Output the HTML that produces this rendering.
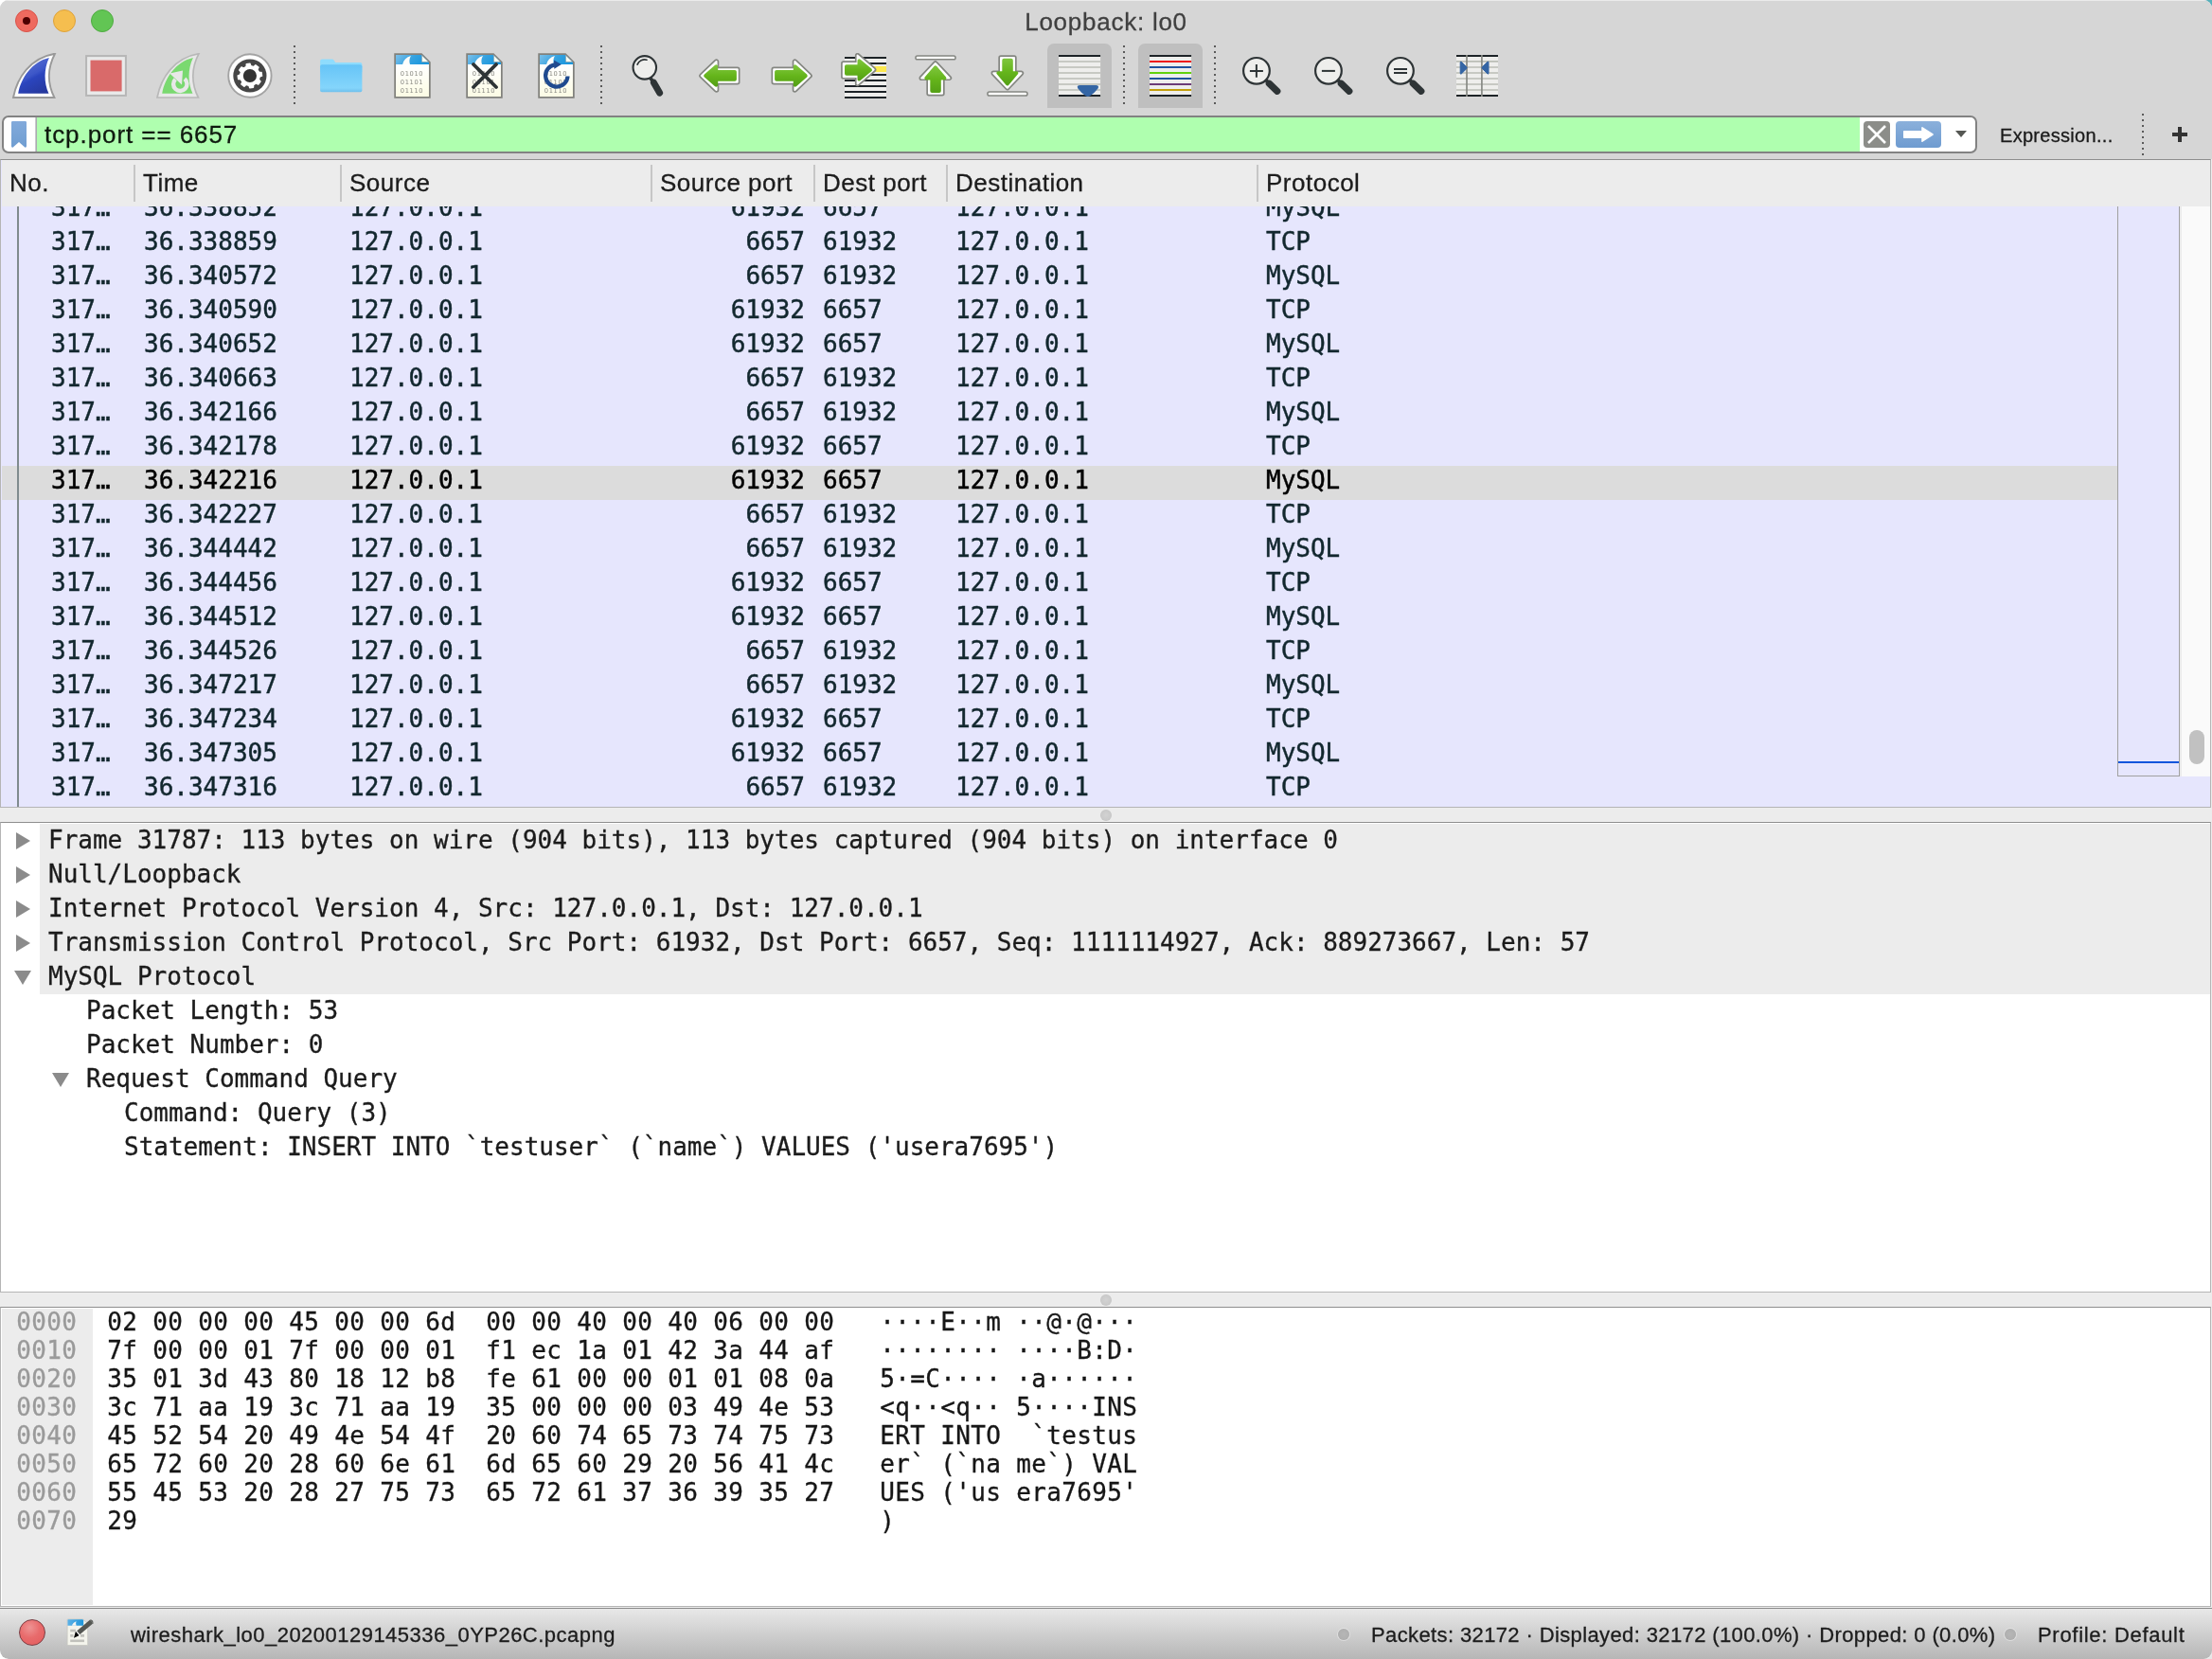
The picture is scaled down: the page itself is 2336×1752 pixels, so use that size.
<!DOCTYPE html>
<html lang="en"><head><meta charset="utf-8"><title>Loopback: lo0</title>
<style>
html,body{margin:0;padding:0;background:#fff;}
body{width:2336px;height:1752px;overflow:hidden;}
#ctr{position:absolute;left:2322px;top:0;width:14px;height:14px;background:linear-gradient(225deg,#58b0bb 0,#58b0bb 30%,#bdbdbd 42%,#d6d6d6 60%);}
#cbr{position:absolute;left:2322px;top:1738px;width:14px;height:14px;background:#e6e6e6;}
#win{position:relative;width:2336px;height:1752px;overflow:hidden;background:#ececec;border-radius:9px 9px 7px 9px;font-family:"Liberation Sans","DejaVu Sans",sans-serif;color:#1a1a1a;}
#win i{display:block;position:absolute;font-style:normal;}
#win span,#win div,#win svg{position:absolute;}
#win{position:relative;will-change:transform;}

/* title bar */
#titlebar{left:0;top:0;width:2336px;height:168px;background:#d6d6d6;box-shadow:inset 0 1px 0 #ebebeb;}
.tl{top:10px;width:24px;height:24px;border-radius:50%;box-sizing:border-box;}
.tl-r{left:16px;background:#ee6a5f;border:1px solid #d9534a;}
.tl-r i{left:7px;top:7px;width:8px;height:8px;border-radius:50%;background:#4d0000;}
.tl-y{left:56px;background:#f5be4f;border:1px solid #dea23a;}
.tl-g{left:96px;background:#62c554;border:1px solid #4fab42;}
#title{left:0;top:7px;width:2336px;text-align:center;font-size:26px;letter-spacing:0.75px;line-height:32px;color:#404040;}

/* toolbar */
#toolbar{left:0;top:0;width:2336px;height:120px;}
.tsep{top:48px;width:2px;height:62px;background:repeating-linear-gradient(to bottom,#5a5a5a 0,#5a5a5a 2px,transparent 2px,transparent 6px);}
.pressed{top:46px;width:68px;height:68px;border-radius:7px 7px 0 0;background:#bfbfbf;}
.ti{top:56px;}

/* filter bar */
#filter{left:2px;top:122px;width:2086px;height:40px;box-sizing:border-box;border:2px solid #828282;border-radius:7px;background:#fff;overflow:hidden;}
#fbm{left:7px;top:3px;width:18px;height:30px;}
#fsep{left:33px;top:0;width:2px;height:36px;background:linear-gradient(to right,#d8d8dc,#9c9ca2);}
#fgreen{left:35px;top:0;width:1925px;height:36px;background:#afffaf;}
#ftext{left:43px;top:0;font-size:26px;letter-spacing:0.93px;line-height:36px;color:#0f1a0f;white-space:nowrap;}
#fx{left:1964px;top:4px;width:28px;height:28px;}
#fapply{left:1998px;top:4px;width:48px;height:28px;}
#fdd{left:2061px;top:14px;width:0;height:0;border-left:6.7px solid transparent;border-right:6.7px solid transparent;border-top:7.2px solid #555753;}
#expr{left:2112px;top:123px;font-size:20px;letter-spacing:0.3px;line-height:40px;color:#1a1a1a;white-space:nowrap;}
#esep{left:2262px;top:120px;height:44px;}
#plus{left:2294px;top:134px;width:16px;height:16px;background:linear-gradient(#333,#333) 6px 0/4px 16px no-repeat,linear-gradient(#333,#333) 0 6px/16px 4px no-repeat;}

/* packet list */
#plist{left:0;top:168px;width:2335px;height:685px;box-sizing:border-box;border:1px solid #b5b5b5;border-top-color:#8e8e8e;background:#e6e6fd;overflow:hidden;}
.pin{left:1px;top:0;width:2332px;height:100%;}
#detail .pin,#hex .pin{top:1px;}
#phead{left:0;top:0;width:2332px;height:49px;background:#ececec;}
.hc{top:0;font-size:26px;letter-spacing:0.5px;line-height:49px;white-space:nowrap;color:#1c1c1c;}
#win i.hs{top:5px;width:2px;height:39px;background:#c6c6c6;}
#prows{left:0;top:49px;width:2332px;height:634px;overflow:hidden;background:#e6e6fd;font-family:"DejaVu Sans Mono","Liberation Mono",monospace;font-size:26px;color:#12272e;}
.pr{left:0;width:2332px;height:36px;line-height:30px;white-space:pre;}
.pr.sel{background:#dcdcdc;color:#000;width:2234px;}
.c{top:0;}
.c0{left:52px;}
.c1{left:150px;}
.c2{left:367px;}
.c3{left:688px;width:160px;text-align:right;}
.c4{left:867px;}
.c5{left:1007px;}
.c6{left:1335px;}
#convline{left:16px;top:0;width:2px;height:634px;background:#808b8e;}
#minimap{left:2234px;top:49px;width:66px;height:602px;box-sizing:border-box;border:1.3px solid #a0a0a0;border-top:none;background:#e6e6fd;}
#minimap i{left:0;top:586px;width:64px;height:2px;background:#0f55dc;}
#vscroll{left:2300px;top:49px;width:32px;height:602px;background:#fafafa;box-sizing:border-box;border-left:2px solid #ebebeb;}
#vscroll i{left:8px;top:553px;width:16px;height:36px;border-radius:8px;background:#c1c1c1;}

#win i.grip{left:1162px;width:12px;height:12px;border-radius:50%;background:radial-gradient(circle,#d2d2d2 0,#cbcbcb 55%,#b9b9b9 100%);box-sizing:border-box;}

/* detail */
#detail{left:0;top:868px;width:2335px;height:497px;box-sizing:border-box;border:1px solid #b5b5b5;border-top-color:#8e8e8e;background:#fff;overflow:hidden;font-family:"DejaVu Sans Mono","Liberation Mono",monospace;font-size:26px;color:#1b1b1b;}
#win i.dbg{left:40px;width:2292px;height:36px;background:#ececec;}
.dl{height:36px;line-height:34px;white-space:pre;}
#win i.tri{width:0;height:0;}
#win i.tri.c{margin-left:15px;margin-top:9px;border-left:15px solid #8b8b8b;border-top:9px solid transparent;border-bottom:9px solid transparent;}
#win i.tri.o{margin-left:13px;margin-top:11px;border-top:15px solid #8b8b8b;border-left:9px solid transparent;border-right:9px solid transparent;}

/* hex */
#hex{left:0;top:1380px;width:2335px;height:317px;box-sizing:border-box;border:1px solid #b5b5b5;border-top-color:#8e8e8e;background:#fff;overflow:hidden;font-family:"DejaVu Sans Mono","Liberation Mono",monospace;font-size:26px;color:#161616;}
#hoff{left:0;top:0;width:96px;height:313px;background:#ececec;}
.hr{left:0;height:30px;line-height:30px;white-space:pre;width:2332px;margin-top:-1px;letter-spacing:0.3467px;}
.hr span{top:0;white-space:pre;}
.ho{left:15.2px;color:#9a9a9a;}
.h1{left:111.2px;}
.h2{left:511.2px;}
.a1{left:927.2px;}
.a2{left:1071.2px;}

/* status */
#status{left:0;top:1698px;width:2336px;height:54px;background:linear-gradient(to bottom,#e8e8e8 0,#cfcfcf 50%,#b6b6b6 100%);border-top:1px solid #8c8c8c;box-sizing:border-box;border-radius:0 0 9px 9px;font-size:22px;color:#1c1c1c;}
#sred{left:20px;top:11px;width:28px;height:28px;border-radius:50%;background:radial-gradient(circle at 40% 30%,#ee9494 0,#e86b6c 45%,#e35a5b 100%);border:1.6px solid #7b3c42;box-sizing:border-box;}
#sedit{left:68px;top:7px;}
#sfile{left:138px;top:0;line-height:55px;white-space:nowrap;letter-spacing:0.48px;}
#spk{left:1448px;top:0;line-height:55px;white-space:nowrap;letter-spacing:0.38px;}
#sprof{left:2152px;top:0;line-height:55px;white-space:nowrap;letter-spacing:0.7px;}
#win i.sdot{top:21px;width:12px;height:12px;border-radius:50%;background:radial-gradient(circle,#b6b6b6 0,#b0b0b0 60%,#a4a4a4 100%);box-shadow:0 0 0 1px rgba(235,235,235,0.6);box-sizing:border-box;}

#prows{-webkit-text-stroke:0.45px currentColor;}
#detail,#hex{-webkit-text-stroke:0.32px currentColor;}
#title,#ftext,#expr,.hc,#status{-webkit-text-stroke:0.3px currentColor;}

</style></head>
<body>
<div id="ctr"></div><div id="cbr"></div>
<div id="win">
<div id="titlebar"><span class="tl tl-r"><i></i></span><span class="tl tl-y"></span><span class="tl tl-g"></span><div id="title">Loopback: lo0</div></div>
<div id="toolbar">
<span class="tsep" style="left:310px"></span><span class="tsep" style="left:634px"></span><span class="tsep" style="left:1186px"></span><span class="tsep" style="left:1282px"></span>
<svg class="ti" style="left:12px" width="48" height="48" viewBox="0 0 48 48"><defs><linearGradient id="gs1" x1="0.25" y1="0.05" x2="0.7" y2="1"><stop offset="0" stop-color="#5c72d4"/><stop offset="0.45" stop-color="#3c56c8"/><stop offset="0.55" stop-color="#2b45be"/><stop offset="1" stop-color="#27399f"/></linearGradient></defs>
<path d="M2 47 C6 26 20 5 46 0.7 C38 16 38 32 45.4 47 Z" fill="#fff" stroke="#999" stroke-width="1.9" stroke-linejoin="miter"/>
<path d="M7.2 42.8 C10 26 22 9 39.9 4.9 C34.2 17 34.2 31 39.5 42.8 Z" fill="url(#gs1)"/></svg>
<svg class="ti" style="left:88px" width="48" height="48" viewBox="0 0 48 48"><rect x="3.1" y="3.1" width="41.8" height="41.8" fill="#e9eaea" stroke="#b6b6b6" stroke-width="2"/>
<rect x="7.5" y="7.6" width="33.1" height="32.8" fill="#d96a6a"/></svg>
<svg class="ti" style="left:164px" width="48" height="48" viewBox="0 0 48 48"><path d="M2 47 C6 26 20 5 46 0.7 C38 16 38 32 45.4 47 Z" fill="#e8e8e8" stroke="#b8b8b8" stroke-width="1.7"/>
<path d="M7.2 42.8 C10 26 22 9 39.9 4.9 C34.2 17 34.2 31 39.5 42.8 Z" fill="#7ad970"/>
<path d="M30.93 27.28 A7.2 7.2 0 1 1 21.2 27.7" fill="none" stroke="#e8e8e8" stroke-width="4.4"/>
<path d="M15.2 21.4 L29 18.6 L28 33.6 Z" fill="#e8e8e8"/></svg>
<svg class="ti" style="left:240px" width="48" height="48" viewBox="0 0 48 48"><circle cx="23.9" cy="24" r="22.7" fill="#fff" stroke="#a3a3a3" stroke-width="1.9"/>
<circle cx="23.9" cy="24" r="17.6" fill="#464646"/>
<path d="M33.43 20.36 L35.99 20.43 L36.50 24.10 L34.06 24.88 L33.21 28.16 L34.97 30.02 L32.74 32.98 L30.46 31.81 L27.54 33.53 L27.47 36.09 L23.80 36.60 L23.02 34.16 L19.74 33.31 L17.88 35.07 L14.92 32.84 L16.09 30.56 L14.37 27.64 L11.81 27.57 L11.30 23.90 L13.74 23.12 L14.59 19.84 L12.83 17.98 L15.06 15.02 L17.34 16.19 L20.26 14.47 L20.33 11.91 L24.00 11.40 L24.78 13.84 L28.06 14.69 L29.92 12.93 L32.88 15.16 L31.71 17.44 Z" fill="#fff" stroke="#fff" stroke-width="1.6" stroke-linejoin="round"/>
<circle cx="23.9" cy="24" r="10.6" fill="#fff"/>
<circle cx="23.9" cy="24" r="7.1" fill="#333"/></svg>
<svg class="ti" style="left:336px" width="48" height="48" viewBox="0 0 48 48"><defs><linearGradient id="gf1" x1="0" y1="0" x2="0" y2="1"><stop offset="0" stop-color="#66c4f7"/><stop offset="0.85" stop-color="#84d5fb"/><stop offset="1" stop-color="#6fc0ec"/></linearGradient></defs>
<path d="M2.1 8.4 Q2.1 6.4 4.1 6.4 L14.6 6.4 Q15.8 6.4 16.6 7.6 L18.2 10 L44.4 10 Q46.4 10 46.4 12 L46.4 20 L2.1 20 Z" fill="#8fdcfd"/>
<path d="M2.1 14.2 Q2.1 12.2 4.1 12.2 L44.4 12.2 Q46.4 12.2 46.4 14.2 L46.4 39.4 Q46.4 41.2 44.6 41.2 L3.9 41.2 Q2.1 41.2 2.1 39.4 Z" fill="url(#gf1)"/></svg>
<svg class="ti" style="left:412px" width="48" height="48" viewBox="0 0 48 48"><defs><linearGradient id="gfla" x1="0" y1="0" x2="1" y2="0.25"><stop offset="0" stop-color="#7cc0ea"/><stop offset="0.55" stop-color="#35a2e0"/><stop offset="1" stop-color="#1b97dd"/></linearGradient>
<linearGradient id="gfba" x1="0" y1="0" x2="0" y2="1"><stop offset="0.25" stop-color="#ffffff"/><stop offset="1" stop-color="#fcfce4"/></linearGradient></defs>
<path d="M5.15 1.1 L33.1 1.1 L41.85 9.8 L41.85 46.75 L5.15 46.75 Z" fill="url(#gfba)" stroke="#81817c" stroke-width="1.75" stroke-linejoin="miter"/>
<path d="M6 1.95 L32.8 1.95 L41 10.1 L41 11.9 L6 11.9 Z" fill="url(#gfla)"/>
<path d="M13.1 11.9 C14.2 7.6 17.2 4.4 21.9 3.05 C20.2 6 20 9 21 11.9 Z" fill="#fdfdfb"/>
<path d="M33.4 2.2 L33.4 9.5 L40.8 9.5 Z" fill="#fbfbef" stroke="#6d8fa3" stroke-width="0.6"/>
<g font-family="DejaVu Sans, sans-serif" font-size="6.7" fill="#888882" letter-spacing="0.62"><text x="10.8" y="23.7">01010</text><text x="10.8" y="32.65">01101</text><text x="10.8" y="41.6">01110</text></g></svg>
<svg class="ti" style="left:488px" width="48" height="48" viewBox="0 0 48 48"><defs><linearGradient id="gflb" x1="0" y1="0" x2="1" y2="0.25"><stop offset="0" stop-color="#7cc0ea"/><stop offset="0.55" stop-color="#35a2e0"/><stop offset="1" stop-color="#1b97dd"/></linearGradient>
<linearGradient id="gfbb" x1="0" y1="0" x2="0" y2="1"><stop offset="0.25" stop-color="#ffffff"/><stop offset="1" stop-color="#fcfce4"/></linearGradient></defs>
<path d="M5.15 1.1 L33.1 1.1 L41.85 9.8 L41.85 46.75 L5.15 46.75 Z" fill="url(#gfbb)" stroke="#81817c" stroke-width="1.75" stroke-linejoin="miter"/>
<path d="M6 1.95 L32.8 1.95 L41 10.1 L41 11.9 L6 11.9 Z" fill="url(#gflb)"/>
<path d="M13.1 11.9 C14.2 7.6 17.2 4.4 21.9 3.05 C20.2 6 20 9 21 11.9 Z" fill="#fdfdfb"/>
<path d="M33.4 2.2 L33.4 9.5 L40.8 9.5 Z" fill="#fbfbef" stroke="#6d8fa3" stroke-width="0.6"/>
<g font-family="DejaVu Sans, sans-serif" font-size="6.7" fill="#888882" letter-spacing="0.62"><text x="10.8" y="23.7">01010</text><text x="10.8" y="32.65">01101</text><text x="10.8" y="41.6">01110</text></g><path d="M12 12 L36 36 M36 12 L12 36" stroke="#2e3436" stroke-width="3.8" stroke-linecap="round"/></svg>
<svg class="ti" style="left:564px" width="48" height="48" viewBox="0 0 48 48"><defs><linearGradient id="gflc" x1="0" y1="0" x2="1" y2="0.25"><stop offset="0" stop-color="#7cc0ea"/><stop offset="0.55" stop-color="#35a2e0"/><stop offset="1" stop-color="#1b97dd"/></linearGradient>
<linearGradient id="gfbc" x1="0" y1="0" x2="0" y2="1"><stop offset="0.25" stop-color="#ffffff"/><stop offset="1" stop-color="#fcfce4"/></linearGradient></defs>
<path d="M5.15 1.1 L33.1 1.1 L41.85 9.8 L41.85 46.75 L5.15 46.75 Z" fill="url(#gfbc)" stroke="#81817c" stroke-width="1.75" stroke-linejoin="miter"/>
<path d="M6 1.95 L32.8 1.95 L41 10.1 L41 11.9 L6 11.9 Z" fill="url(#gflc)"/>
<path d="M13.1 11.9 C14.2 7.6 17.2 4.4 21.9 3.05 C20.2 6 20 9 21 11.9 Z" fill="#fdfdfb"/>
<path d="M33.4 2.2 L33.4 9.5 L40.8 9.5 Z" fill="#fbfbef" stroke="#6d8fa3" stroke-width="0.6"/>
<g font-family="DejaVu Sans, sans-serif" font-size="6.7" fill="#888882" letter-spacing="0.62"><text x="10.8" y="23.7">01010</text><text x="10.8" y="32.65">01101</text><text x="10.8" y="41.6">01110</text></g><path d="M35.5 24.5 A11.7 11.7 0 1 1 21.8 12.4" fill="none" stroke="#1f4a8f" stroke-width="4.2"/>
<path d="M21 7.6 L28.9 11.9 L21.3 16.7 Z" fill="#1f4a8f"/></svg>
<svg class="ti" style="left:660px" width="48" height="48" viewBox="0 0 48 48"><circle cx="20.8" cy="15.35" r="12.25" fill="#eeeeec" stroke="#2e3436" stroke-width="2.1"/>
<path d="M13.07 12.07 A8.4 8.4 0 0 1 22.97 7.24" fill="none" stroke="#2e3436" stroke-width="1.7" stroke-linecap="round"/>
<path d="M26.4 26 L30.3 30.8" stroke="#2e3436" stroke-width="3.6"/>
<path d="M30.4 31.2 L36.6 42.1" stroke="#2e3436" stroke-width="7" stroke-linecap="round"/></svg>
<svg class="ti" style="left:736px" width="48" height="48" viewBox="0 0 48 48"><defs><linearGradient id="ggl" x1="0" y1="0" x2="0" y2="1"><stop offset="0" stop-color="#7cc43a"/><stop offset="0.5" stop-color="#65b51b"/><stop offset="1" stop-color="#56a216"/></linearGradient></defs><path d="M4.88 24.00 L20.60 9.05 L20.60 17.30 L42.80 17.30 L42.80 30.70 L20.60 30.70 L20.60 38.95 Z" fill="#848681" stroke="#848681" stroke-width="5.40" stroke-linejoin="round"/><path d="M4.88 24.00 L20.60 9.05 L20.60 17.30 L42.80 17.30 L42.80 30.70 L20.60 30.70 L20.60 38.95 Z" fill="#fff" stroke="#fff" stroke-width="2.00" stroke-linejoin="round"/><path d="M9.17 24.00 L20.30 14.27 L20.30 19.80 L40.00 19.80 L40.00 27.80 L20.30 27.80 L20.30 33.73 Z" fill="url(#ggl)" stroke="url(#ggl)" stroke-width="3.80" stroke-linejoin="round"/></svg>
<svg class="ti" style="left:812px" width="48" height="48" viewBox="0 0 48 48"><defs><linearGradient id="ggr" x1="0" y1="0" x2="0" y2="1"><stop offset="0" stop-color="#7cc43a"/><stop offset="0.5" stop-color="#65b51b"/><stop offset="1" stop-color="#56a216"/></linearGradient></defs><path d="M43.12 24.00 L27.40 9.05 L27.40 17.30 L5.20 17.30 L5.20 30.70 L27.40 30.70 L27.40 38.95 Z" fill="#848681" stroke="#848681" stroke-width="5.40" stroke-linejoin="round"/><path d="M43.12 24.00 L27.40 9.05 L27.40 17.30 L5.20 17.30 L5.20 30.70 L27.40 30.70 L27.40 38.95 Z" fill="#fff" stroke="#fff" stroke-width="2.00" stroke-linejoin="round"/><path d="M38.83 24.00 L27.70 14.27 L27.70 19.80 L8.00 19.80 L8.00 27.80 L27.70 27.80 L27.70 33.73 Z" fill="url(#ggr)" stroke="url(#ggr)" stroke-width="3.80" stroke-linejoin="round"/></svg>
<svg class="ti" style="left:888px" width="48" height="48" viewBox="0 0 48 48"><defs><linearGradient id="ggg" x1="0" y1="0" x2="0" y2="1"><stop offset="0" stop-color="#7cc43a"/><stop offset="0.5" stop-color="#65b51b"/><stop offset="1" stop-color="#56a216"/></linearGradient></defs><rect x="4" y="4" width="44" height="44" fill="#eeeeec"/>
<g stroke="#1d2327" stroke-width="1.9"><path d="M4 4.95 H48"/><path d="M4 10.95 H48"/><path d="M4 22.95 H48"/><path d="M4 28.95 H48"/><path d="M4 34.95 H48"/><path d="M4 40.95 H48"/><path d="M4 46.95 H48"/></g>
<rect x="28" y="14" width="20" height="6" fill="#fce94f"/><path d="M34.70 17.60 L17.60 2.65 L17.60 10.94 L2.76 10.94 L2.76 24.90 L17.60 24.90 L17.60 32.55 Z" fill="#848681" stroke="#848681" stroke-width="5.40" stroke-linejoin="round"/><path d="M34.70 17.60 L17.60 2.65 L17.60 10.94 L2.76 10.94 L2.76 24.90 L17.60 24.90 L17.60 32.55 Z" fill="#fff" stroke="#fff" stroke-width="2.00" stroke-linejoin="round"/><path d="M31.11 17.90 L19.40 8.15 L19.40 14.10 L5.90 14.10 L5.90 21.80 L19.40 21.80 L19.40 27.65 Z" fill="url(#ggg)" stroke="url(#ggg)" stroke-width="3.80" stroke-linejoin="round"/></svg>
<svg class="ti" style="left:964px" width="48" height="48" viewBox="0 0 48 48"><defs><linearGradient id="ggt" x1="0" y1="0" x2="0" y2="1"><stop offset="0" stop-color="#7cc43a"/><stop offset="0.5" stop-color="#65b51b"/><stop offset="1" stop-color="#56a216"/></linearGradient></defs><rect x="2.95" y="2.95" width="42.1" height="3.9" rx="1.95" fill="#fff" stroke="#848681" stroke-width="1.5"/><path d="M23.85 10.98 L38.49 26.40 L31.00 26.40 L31.00 42.80 L17.00 42.80 L17.00 26.40 L9.21 26.40 Z" fill="#848681" stroke="#848681" stroke-width="5.40" stroke-linejoin="round"/><path d="M23.85 10.98 L38.49 26.40 L31.00 26.40 L31.00 42.80 L17.00 42.80 L17.00 26.40 L9.21 26.40 Z" fill="#fff" stroke="#fff" stroke-width="2.00" stroke-linejoin="round"/><path d="M23.85 15.24 L33.47 26.60 L27.90 26.60 L27.90 40.00 L20.20 40.00 L20.20 26.60 L14.23 26.60 Z" fill="url(#ggt)" stroke="url(#ggt)" stroke-width="3.80" stroke-linejoin="round"/></svg>
<svg class="ti" style="left:1040px" width="48" height="48" viewBox="0 0 48 48"><defs><linearGradient id="ggb" x1="0" y1="0" x2="0" y2="1"><stop offset="0" stop-color="#7cc43a"/><stop offset="0.5" stop-color="#65b51b"/><stop offset="1" stop-color="#56a216"/></linearGradient></defs><rect x="2.9" y="40.9" width="42.1" height="4.2" rx="2.1" fill="#fff" stroke="#848681" stroke-width="1.5"/><path d="M23.85 36.72 L38.49 21.30 L31.00 21.30 L31.00 4.90 L17.00 4.90 L17.00 21.30 L9.21 21.30 Z" fill="#848681" stroke="#848681" stroke-width="5.40" stroke-linejoin="round"/><path d="M23.85 36.72 L38.49 21.30 L31.00 21.30 L31.00 4.90 L17.00 4.90 L17.00 21.30 L9.21 21.30 Z" fill="#fff" stroke="#fff" stroke-width="2.00" stroke-linejoin="round"/><path d="M23.85 32.46 L33.47 21.10 L27.90 21.10 L27.90 7.70 L20.20 7.70 L20.20 21.10 L14.23 21.10 Z" fill="url(#ggb)" stroke="url(#ggb)" stroke-width="3.80" stroke-linejoin="round"/></svg>
<span class="pressed" style="left:1106px"></span><svg class="ti" style="left:1116px" width="48" height="48" viewBox="0 0 48 48"><rect x="2" y="3" width="44.1" height="42" fill="#eeeeec"/>
<g stroke="#babdb6" stroke-width="1.7"><path d="M2 9 H46.1"/><path d="M2 15 H46.1"/><path d="M2 21 H46.1"/><path d="M2 27 H46.1"/><path d="M2 33 H46.1"/><path d="M2 39 H46.1"/></g>
<path d="M2 3 H46.1 M2 45 H46.1" stroke="#1d2327" stroke-width="2"/>
<path d="M24.6 34 L41.2 34 Q45.4 34.4 43.4 37.4 Q39.5 42.5 35.2 45.2 Q32.9 46.6 30.6 45.2 Q26.3 42.5 22.4 37.4 Q20.4 34.4 24.6 34 Z" fill="#3465a4"/></svg>
<span class="pressed" style="left:1202px"></span><svg class="ti" style="left:1212px" width="48" height="48" viewBox="0 0 48 48"><rect x="2" y="3" width="44.1" height="42" fill="#eeeeec"/>
<g stroke-width="2"><path d="M2 2.95 H46.1" stroke="#1d2327"/><path d="M2 8.9 H46.1" stroke="#ef1a19"/><path d="M2 15 H46.1" stroke="#20539e"/><path d="M2 21 H46.1" stroke="#62d10c"/><path d="M2 27 H46.1" stroke="#20539e"/><path d="M2 33 H46.1" stroke="#6c3c77"/><path d="M2 39 H46.1" stroke="#c39e0a"/><path d="M2 45 H46.1" stroke="#1d2327"/></g></svg>
<svg class="ti" style="left:1308px" width="48" height="48" viewBox="0 0 48 48"><circle cx="18.95" cy="18.85" r="13.85" fill="#eeeeec" stroke="#2e3436" stroke-width="2.2"/>
<path d="M28.6 28.4 L32 31.6" stroke="#2e3436" stroke-width="3.6"/>
<path d="M32.3 32.2 L40.8 40.3" stroke="#2e3436" stroke-width="7.2" stroke-linecap="round"/><path d="M11.9 18.9 H25.9 M18.9 12.1 V25.8" stroke="#2e3436" stroke-width="2"/></svg>
<svg class="ti" style="left:1384px" width="48" height="48" viewBox="0 0 48 48"><circle cx="18.95" cy="18.85" r="13.85" fill="#eeeeec" stroke="#2e3436" stroke-width="2.2"/>
<path d="M28.6 28.4 L32 31.6" stroke="#2e3436" stroke-width="3.6"/>
<path d="M32.3 32.2 L40.8 40.3" stroke="#2e3436" stroke-width="7.2" stroke-linecap="round"/><path d="M11.9 18.9 H25.9" stroke="#2e3436" stroke-width="2"/></svg>
<svg class="ti" style="left:1460px" width="48" height="48" viewBox="0 0 48 48"><circle cx="18.95" cy="18.85" r="13.85" fill="#eeeeec" stroke="#2e3436" stroke-width="2.2"/>
<path d="M28.6 28.4 L32 31.6" stroke="#2e3436" stroke-width="3.6"/>
<path d="M32.3 32.2 L40.8 40.3" stroke="#2e3436" stroke-width="7.2" stroke-linecap="round"/><path d="M12 17.1 H26 M12 21.1 H26" stroke="#2e3436" stroke-width="2"/></svg>
<svg class="ti" style="left:1536px" width="48" height="48" viewBox="0 0 48 48"><rect x="2" y="3" width="44" height="42" fill="#eeeeec"/>
<g stroke="#babdb6" stroke-width="1.7"><path d="M2 8.9 H46"/><path d="M2 15 H46"/><path d="M2 21 H46"/><path d="M2 27 H46"/><path d="M2 33 H46"/><path d="M2 39 H46"/></g>
<path d="M2 2.95 H46 M2 45 H46" stroke="#1d2327" stroke-width="2"/>
<path d="M13 2 V46 M28.9 2 V46" stroke="#888a85" stroke-width="1.7"/>
<path d="M7.2 9.2 L13 14.9 L13 16.3 L7.2 22 Q6.2 22.6 6.2 21 L6.2 10.2 Q6.2 8.6 7.2 9.2 Z" fill="#3465a4" stroke="#3465a4" stroke-width="1" stroke-linejoin="round"/>
<path d="M35 9.2 L29.2 14.9 L29.2 16.3 L35 22 Q36 22.6 36 21 L36 10.2 Q36 8.6 35 9.2 Z" fill="#3465a4" stroke="#3465a4" stroke-width="1" stroke-linejoin="round"/></svg>
</div>
<div id="filter"><span id="fbm"><svg width="18" height="30" viewBox="0 0 18 30"><defs><linearGradient id="gbm" x1="0" y1="0" x2="0" y2="1"><stop offset="0" stop-color="#82aadb"/><stop offset="1" stop-color="#6f9dd1"/></linearGradient></defs>
<path d="M1 2.2 Q1 1 2.2 1 L15.8 1 Q17 1 17 2.2 L17 27.6 Q16.6 29.3 15.2 28.4 L9 23 L2.8 28.4 Q1.4 29.3 1 27.6 Z" fill="url(#gbm)"/></svg></span><span id="fsep"></span><span id="fgreen"></span><span id="ftext">tcp.port == 6657</span><span id="fx"><svg width="28" height="28" viewBox="0 0 28 28"><rect x="0" y="0" width="28" height="28" rx="4" fill="#8c8d89"/>
<path d="M5 5 L23 23 M23 5 L5 23" stroke="#fff" stroke-width="2.6"/></svg></span><span id="fapply"><svg width="48" height="28" viewBox="0 0 48 28"><defs><linearGradient id="gfa" x1="0" y1="0" x2="0" y2="1"><stop offset="0" stop-color="#8bb0db"/><stop offset="1" stop-color="#6e9bd0"/></linearGradient></defs>
<rect x="0" y="0" width="48" height="28" rx="4" fill="url(#gfa)"/>
<path d="M8.8 10.8 L28 10.8 L28 6.8 L39 14 L28 21.2 L28 17.2 L8.8 17.2 Z" fill="#fff" stroke="#fff" stroke-width="1.6" stroke-linejoin="round"/></svg></span><span id="fdd"></span></div>
<div id="expr">Expression...</div><span class="tsep" id="esep"></span><div id="plus"></div>
<div id="plist"><div class="pin">
<div id="phead"><span class="hc" style="left:8px">No.</span><span class="hc" style="left:149px">Time</span><i class="hs" style="left:139px"></i><span class="hc" style="left:367px">Source</span><i class="hs" style="left:357px"></i><span class="hc" style="left:695px">Source port</span><i class="hs" style="left:685px"></i><span class="hc" style="left:867px">Dest port</span><i class="hs" style="left:857px"></i><span class="hc" style="left:1007px">Destination</span><i class="hs" style="left:997px"></i><span class="hc" style="left:1335px">Protocol</span><i class="hs" style="left:1325px"></i></div>
<div id="prows">
<div class="pr" style="top:-14px"><span class="c c0">317…</span><span class="c c1">36.338852</span><span class="c c2">127.0.0.1</span><span class="c c3">61932</span><span class="c c4">6657</span><span class="c c5">127.0.0.1</span><span class="c c6">MySQL</span></div>
<div class="pr" style="top:22px"><span class="c c0">317…</span><span class="c c1">36.338859</span><span class="c c2">127.0.0.1</span><span class="c c3">6657</span><span class="c c4">61932</span><span class="c c5">127.0.0.1</span><span class="c c6">TCP</span></div>
<div class="pr" style="top:58px"><span class="c c0">317…</span><span class="c c1">36.340572</span><span class="c c2">127.0.0.1</span><span class="c c3">6657</span><span class="c c4">61932</span><span class="c c5">127.0.0.1</span><span class="c c6">MySQL</span></div>
<div class="pr" style="top:94px"><span class="c c0">317…</span><span class="c c1">36.340590</span><span class="c c2">127.0.0.1</span><span class="c c3">61932</span><span class="c c4">6657</span><span class="c c5">127.0.0.1</span><span class="c c6">TCP</span></div>
<div class="pr" style="top:130px"><span class="c c0">317…</span><span class="c c1">36.340652</span><span class="c c2">127.0.0.1</span><span class="c c3">61932</span><span class="c c4">6657</span><span class="c c5">127.0.0.1</span><span class="c c6">MySQL</span></div>
<div class="pr" style="top:166px"><span class="c c0">317…</span><span class="c c1">36.340663</span><span class="c c2">127.0.0.1</span><span class="c c3">6657</span><span class="c c4">61932</span><span class="c c5">127.0.0.1</span><span class="c c6">TCP</span></div>
<div class="pr" style="top:202px"><span class="c c0">317…</span><span class="c c1">36.342166</span><span class="c c2">127.0.0.1</span><span class="c c3">6657</span><span class="c c4">61932</span><span class="c c5">127.0.0.1</span><span class="c c6">MySQL</span></div>
<div class="pr" style="top:238px"><span class="c c0">317…</span><span class="c c1">36.342178</span><span class="c c2">127.0.0.1</span><span class="c c3">61932</span><span class="c c4">6657</span><span class="c c5">127.0.0.1</span><span class="c c6">TCP</span></div>
<div class="pr sel" style="top:274px"><span class="c c0">317…</span><span class="c c1">36.342216</span><span class="c c2">127.0.0.1</span><span class="c c3">61932</span><span class="c c4">6657</span><span class="c c5">127.0.0.1</span><span class="c c6">MySQL</span></div>
<div class="pr" style="top:310px"><span class="c c0">317…</span><span class="c c1">36.342227</span><span class="c c2">127.0.0.1</span><span class="c c3">6657</span><span class="c c4">61932</span><span class="c c5">127.0.0.1</span><span class="c c6">TCP</span></div>
<div class="pr" style="top:346px"><span class="c c0">317…</span><span class="c c1">36.344442</span><span class="c c2">127.0.0.1</span><span class="c c3">6657</span><span class="c c4">61932</span><span class="c c5">127.0.0.1</span><span class="c c6">MySQL</span></div>
<div class="pr" style="top:382px"><span class="c c0">317…</span><span class="c c1">36.344456</span><span class="c c2">127.0.0.1</span><span class="c c3">61932</span><span class="c c4">6657</span><span class="c c5">127.0.0.1</span><span class="c c6">TCP</span></div>
<div class="pr" style="top:418px"><span class="c c0">317…</span><span class="c c1">36.344512</span><span class="c c2">127.0.0.1</span><span class="c c3">61932</span><span class="c c4">6657</span><span class="c c5">127.0.0.1</span><span class="c c6">MySQL</span></div>
<div class="pr" style="top:454px"><span class="c c0">317…</span><span class="c c1">36.344526</span><span class="c c2">127.0.0.1</span><span class="c c3">6657</span><span class="c c4">61932</span><span class="c c5">127.0.0.1</span><span class="c c6">TCP</span></div>
<div class="pr" style="top:490px"><span class="c c0">317…</span><span class="c c1">36.347217</span><span class="c c2">127.0.0.1</span><span class="c c3">6657</span><span class="c c4">61932</span><span class="c c5">127.0.0.1</span><span class="c c6">MySQL</span></div>
<div class="pr" style="top:526px"><span class="c c0">317…</span><span class="c c1">36.347234</span><span class="c c2">127.0.0.1</span><span class="c c3">61932</span><span class="c c4">6657</span><span class="c c5">127.0.0.1</span><span class="c c6">TCP</span></div>
<div class="pr" style="top:562px"><span class="c c0">317…</span><span class="c c1">36.347305</span><span class="c c2">127.0.0.1</span><span class="c c3">61932</span><span class="c c4">6657</span><span class="c c5">127.0.0.1</span><span class="c c6">MySQL</span></div>
<div class="pr" style="top:598px"><span class="c c0">317…</span><span class="c c1">36.347316</span><span class="c c2">127.0.0.1</span><span class="c c3">6657</span><span class="c c4">61932</span><span class="c c5">127.0.0.1</span><span class="c c6">TCP</span></div>
<i id="convline"></i></div>
<div id="minimap"><i></i></div><div id="vscroll"><i></i></div>
</div></div>
<i class="grip" style="top:855px"></i>
<div id="detail"><div class="pin">
<i class="dbg" style="top:0px"></i><i class="tri c" style="top:0px;left:0px"></i><div class="dl" style="top:0px;left:49px">Frame 31787: 113 bytes on wire (904 bits), 113 bytes captured (904 bits) on interface 0</div>
<i class="dbg" style="top:36px"></i><i class="tri c" style="top:36px;left:0px"></i><div class="dl" style="top:36px;left:49px">Null/Loopback</div>
<i class="dbg" style="top:72px"></i><i class="tri c" style="top:72px;left:0px"></i><div class="dl" style="top:72px;left:49px">Internet Protocol Version 4, Src: 127.0.0.1, Dst: 127.0.0.1</div>
<i class="dbg" style="top:108px"></i><i class="tri c" style="top:108px;left:0px"></i><div class="dl" style="top:108px;left:49px">Transmission Control Protocol, Src Port: 61932, Dst Port: 6657, Seq: 1111114927, Ack: 889273667, Len: 57</div>
<i class="dbg" style="top:144px"></i><i class="tri o" style="top:144px;left:0px"></i><div class="dl" style="top:144px;left:49px">MySQL Protocol</div>
<div class="dl" style="top:180px;left:89px">Packet Length: 53</div>
<div class="dl" style="top:216px;left:89px">Packet Number: 0</div>
<i class="tri o" style="top:252px;left:40px"></i><div class="dl" style="top:252px;left:89px">Request Command Query</div>
<div class="dl" style="top:288px;left:129px">Command: Query (3)</div>
<div class="dl" style="top:324px;left:129px">Statement: INSERT INTO `testuser` (`name`) VALUES ('usera7695')</div>
</div></div>
<i class="grip" style="top:1367px"></i>
<div id="hex"><div class="pin"><i id="hoff"></i>
<div class="hr" style="top:0px"><span class="ho">0000</span><span class="h1">02 00 00 00 45 00 00 6d</span><span class="h2">00 00 40 00 40 06 00 00</span><span class="a1">····E··m</span><span class="a2">··@·@···</span></div>
<div class="hr" style="top:30px"><span class="ho">0010</span><span class="h1">7f 00 00 01 7f 00 00 01</span><span class="h2">f1 ec 1a 01 42 3a 44 af</span><span class="a1">········</span><span class="a2">····B:D·</span></div>
<div class="hr" style="top:60px"><span class="ho">0020</span><span class="h1">35 01 3d 43 80 18 12 b8</span><span class="h2">fe 61 00 00 01 01 08 0a</span><span class="a1">5·=C····</span><span class="a2">·a······</span></div>
<div class="hr" style="top:90px"><span class="ho">0030</span><span class="h1">3c 71 aa 19 3c 71 aa 19</span><span class="h2">35 00 00 00 03 49 4e 53</span><span class="a1">&lt;q··&lt;q··</span><span class="a2">5····INS</span></div>
<div class="hr" style="top:120px"><span class="ho">0040</span><span class="h1">45 52 54 20 49 4e 54 4f</span><span class="h2">20 60 74 65 73 74 75 73</span><span class="a1">ERT INTO</span><span class="a2"> `testus</span></div>
<div class="hr" style="top:150px"><span class="ho">0050</span><span class="h1">65 72 60 20 28 60 6e 61</span><span class="h2">6d 65 60 29 20 56 41 4c</span><span class="a1">er` (`na</span><span class="a2">me`) VAL</span></div>
<div class="hr" style="top:180px"><span class="ho">0060</span><span class="h1">55 45 53 20 28 27 75 73</span><span class="h2">65 72 61 37 36 39 35 27</span><span class="a1">UES ('us</span><span class="a2">era7695'</span></div>
<div class="hr" style="top:210px"><span class="ho">0070</span><span class="h1">29</span><span class="h2"></span><span class="a1">)</span><span class="a2"></span></div>
</div></div>
<div id="status"><span id="sred"></span><svg id="sedit" width="34" height="34" viewBox="0 0 34 34"><defs><linearGradient id="gse" x1="0" y1="0" x2="1" y2="0"><stop offset="0" stop-color="#5db1e6"/><stop offset="1" stop-color="#1d95da"/></linearGradient></defs>
<path d="M3.1 4.6 Q3.1 4 3.7 4 L19.8 4 L24.7 9 L24.7 31.5 L3.1 31.5 Z" fill="#f4f4ec" stroke="#c6c6c0" stroke-width="0.8"/>
<path d="M3.4 4.9 Q3.4 4.3 4 4.3 L19.2 4.3 Q20.2 4.5 20.2 5.5 L20.2 10.7 L3.4 10.7 Z" fill="url(#gse)"/>
<path d="M8 10.7 C8.5 8.6 10.3 6.8 12.6 6.2 C11.9 7.8 12 9.4 12.8 10.7 Z" fill="#f6f6f2"/>
<g stroke="#b9b9b4" stroke-width="2.6" opacity="0.85"><path d="M6.2 16 H12"/><path d="M6.2 21.4 H9.4 M17 21.4 H21"/><path d="M6.2 26.8 H21"/></g>
<path d="M27.9 7.1 L14.3 18.6" stroke="#555753" stroke-width="5" stroke-linecap="round"/>
<path d="M27.2 4.6 L30.6 8.6" stroke="#7d7f7b" stroke-width="0.9"/>
<path d="M16.2 20.9 L12.4 16.4" stroke="#fff" stroke-width="1.4"/>
<path d="M15.4 21.2 L11.9 17.1 L10 23.8 Z" fill="#000"/></svg><span id="sfile">wireshark_lo0_20200129145336_0YP26C.pcapng</span><i class="sdot" style="left:1413px"></i><span id="spk">Packets: 32172 · Displayed: 32172 (100.0%) · Dropped: 0 (0.0%)</span><i class="sdot" style="left:2117px"></i><span id="sprof">Profile: Default</span></div>
</div>
</body></html>
